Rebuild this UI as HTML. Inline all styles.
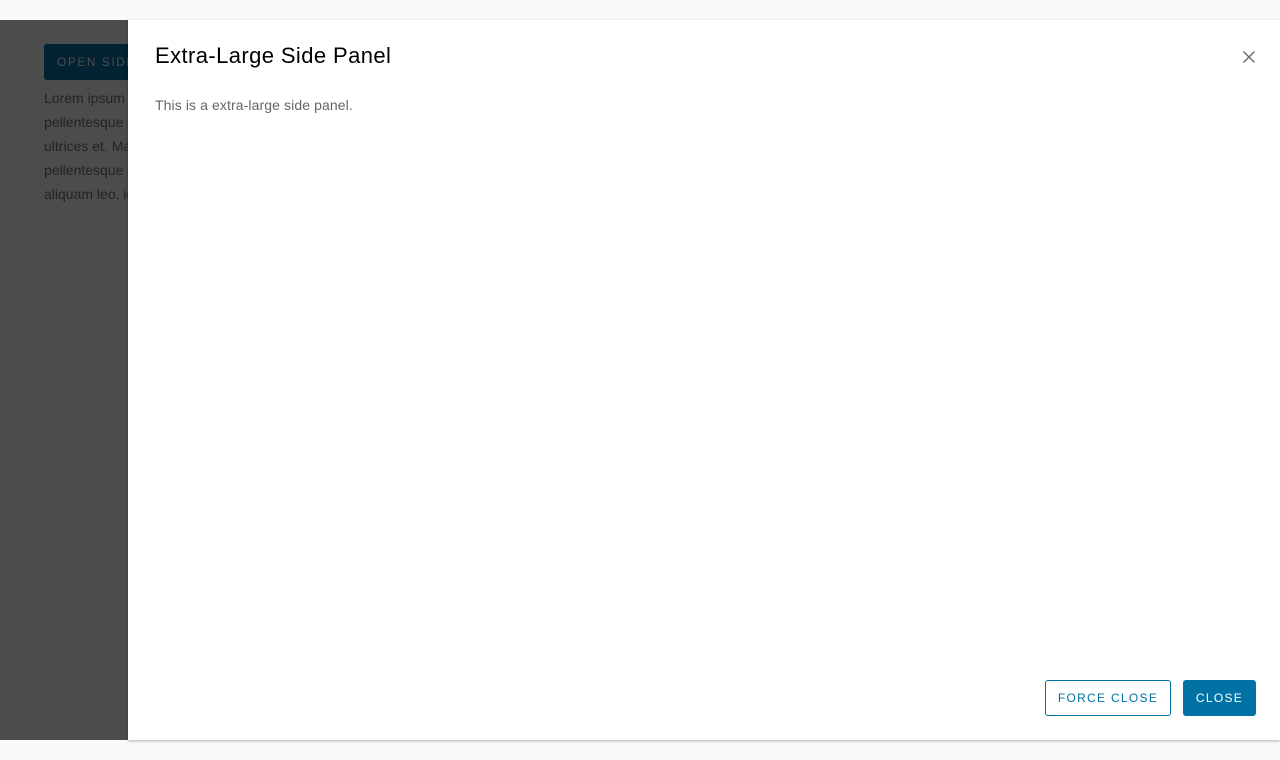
<!DOCTYPE html>
<html><head><style>
body{margin:0;width:1280px;height:760px;background:#fafafa;font-family:"Liberation Sans",sans-serif;position:relative;overflow:hidden}
.bg{position:absolute;left:0;top:20px;width:1280px;height:720px;background:#fff}
.open{position:absolute;left:44px;top:44px;width:120px;height:36px;background:#0072a3;border-radius:3px;color:#fff;font-size:12px;letter-spacing:1.5px;line-height:36px;padding-left:13px;box-sizing:border-box}
.lorem{position:absolute;left:44px;top:86px;color:#777;font-size:14px;line-height:24px;width:400px}
.ov{position:absolute;left:0;top:20px;width:1280px;height:720px;background:rgba(0,0,0,0.7)}
.panel{position:absolute;left:128px;top:20px;width:1152px;height:720px;background:#fff;box-shadow:0 1px 3px rgba(0,0,0,0.3)}
h1{position:absolute;left:27px;top:23px;margin:0;font-weight:normal;font-size:22px;letter-spacing:0.4px;color:#000}
p{position:absolute;left:27px;top:77px;margin:0;font-size:14px;letter-spacing:0.1px;color:#666}
.x{position:absolute;left:1115px;top:31px}
.btn{position:absolute;top:660px;height:36px;box-sizing:border-box;border-radius:3px;font-size:12px;letter-spacing:1.3px;line-height:35px;text-align:center}
.f{left:917px;width:126px;border:1px solid #0072a3;color:#0072a3;background:#fff}
.c{left:1055px;width:73px;background:#0072a3;color:#fff;border:1px solid #0072a3}
</style></head><body>
<div class="bg"></div>
<div class="open">OPEN SIDE PANEL</div>
<div class="lorem">Lorem ipsum dolor sit amet<br>pellentesque habitant morbi<br>ultrices et. Mauris vitae<br>pellentesque sed lectus<br>aliquam leo, id tempor</div>
<div class="ov"></div>
<div class="panel">
<h1>Extra-Large Side Panel</h1>
<p>This is a extra-large side panel.</p>
<svg class="x" width="12" height="12" viewBox="0 0 12 12"><path d="M0.5 0.5L11.5 11.5M11.5 0.5L0.5 11.5" stroke="#666" stroke-width="1.3"/></svg>
<div class="btn f">FORCE CLOSE</div>
<div class="btn c">CLOSE</div>
</div>
</body></html>
